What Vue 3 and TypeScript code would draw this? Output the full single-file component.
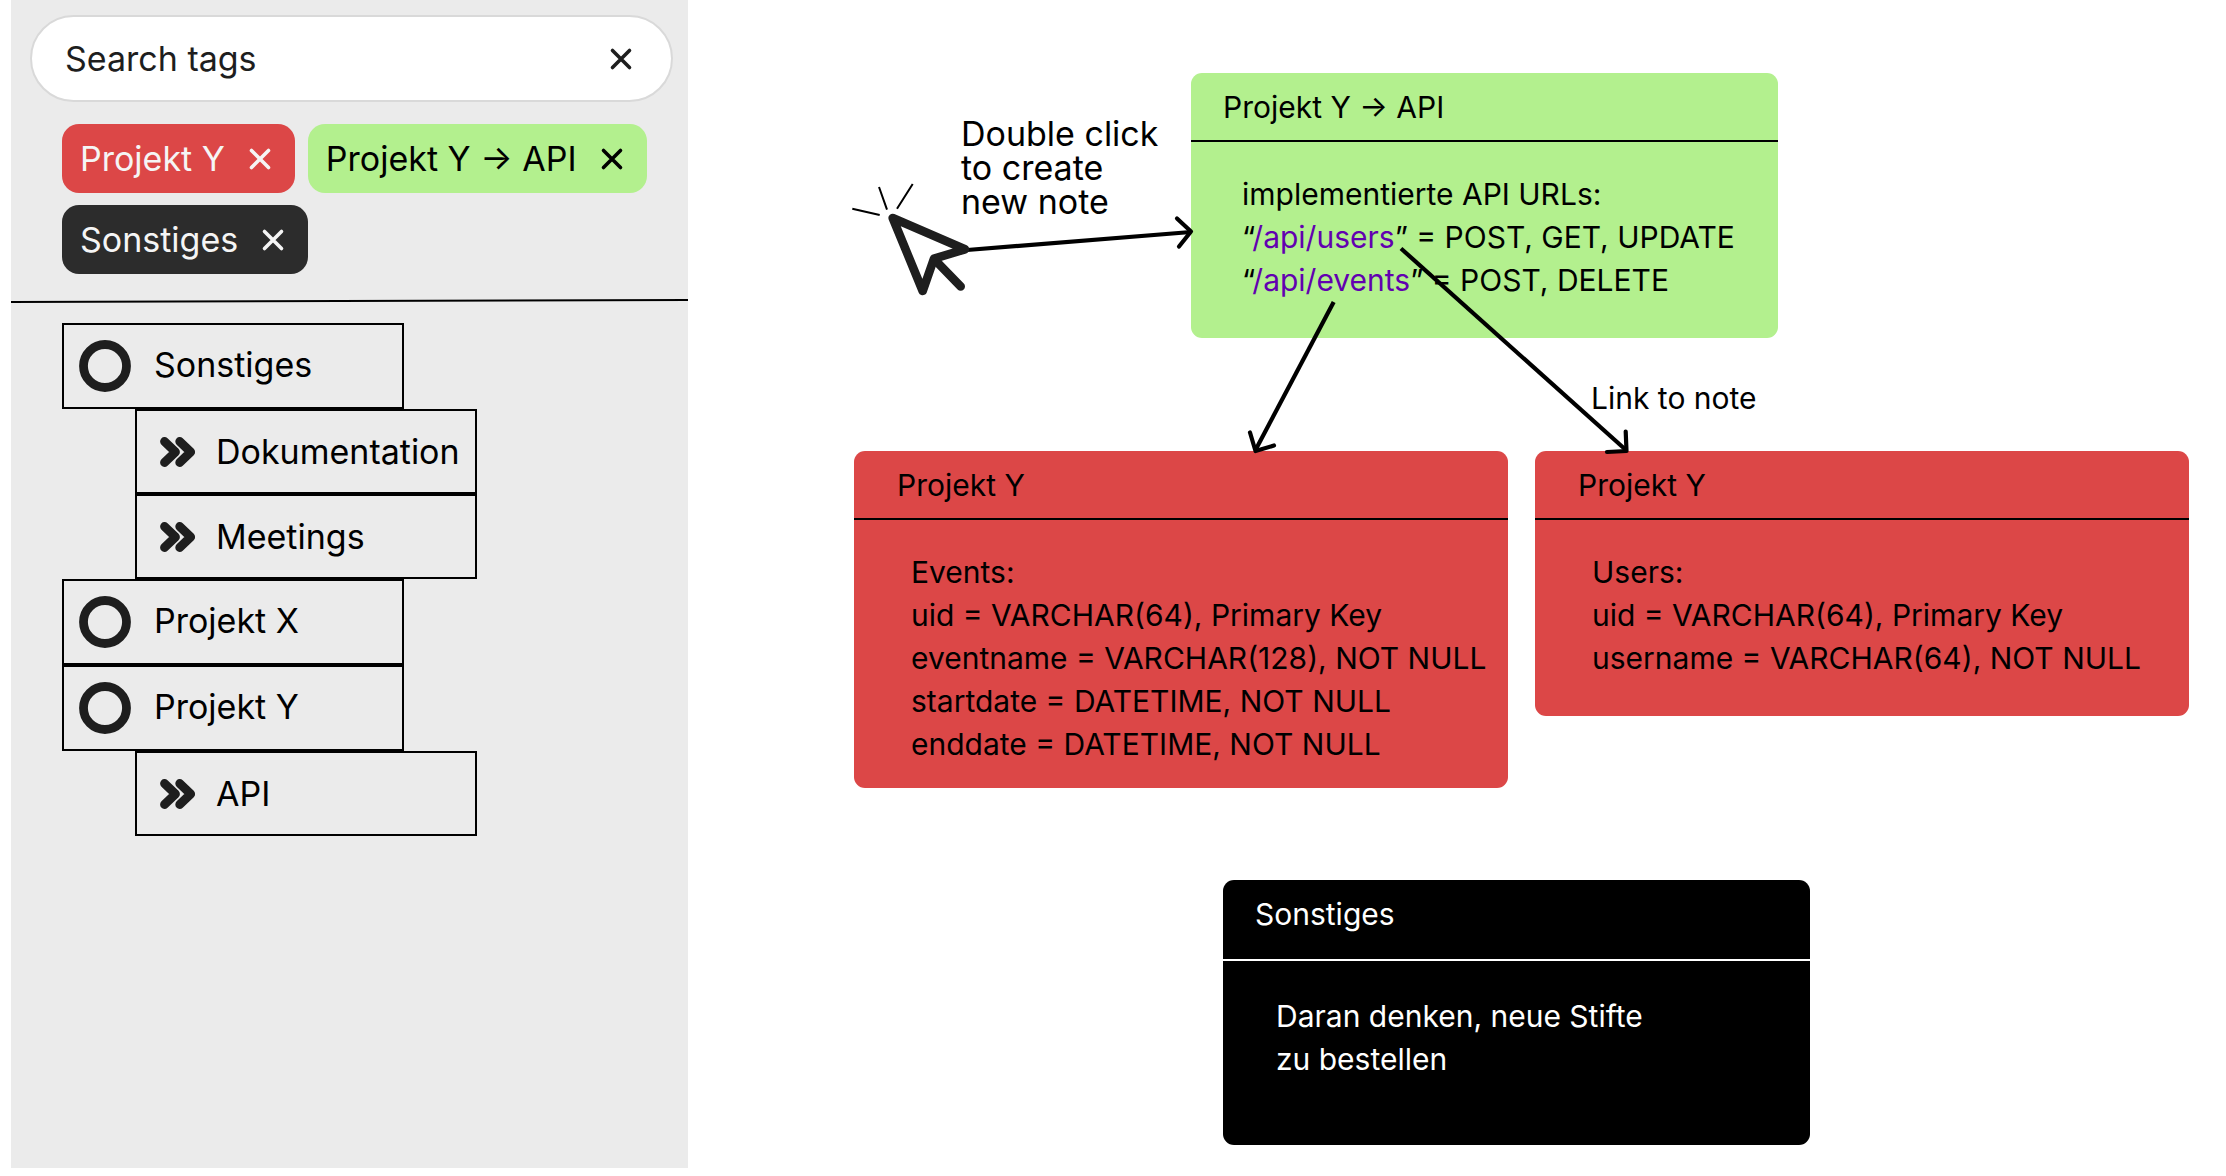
<script setup lang="ts">
import { ref } from 'vue'

interface Tag {
  label: string
  tone: 'red' | 'green' | 'dark'
}

interface TreeGroup {
  name: string
  children: string[]
}

interface Line {
  before: string
  link?: string
  after?: string
}

interface Note {
  id: string
  title: string
  tone: 'red' | 'green' | 'black'
  lines: Line[]
}

const query = ref('')

const tags = ref<Tag[]>([
  { label: 'Projekt Y', tone: 'red' },
  { label: 'Projekt Y → API', tone: 'green' },
  { label: 'Sonstiges', tone: 'dark' },
])

const tree: TreeGroup[] = [
  { name: 'Sonstiges', children: ['Dokumentation', 'Meetings'] },
  { name: 'Projekt X', children: [] },
  { name: 'Projekt Y', children: ['API'] },
]

const notes: Note[] = [
  {
    id: 'api',
    title: 'Projekt Y → API',
    tone: 'green',
    lines: [
      { before: 'implementierte API URLs:' },
      { before: '“', link: '/api/users', after: '” = POST, GET, UPDATE' },
      { before: '“', link: '/api/events', after: '” = POST, DELETE' },
    ],
  },
  {
    id: 'events',
    title: 'Projekt Y',
    tone: 'red',
    lines: [
      { before: 'Events:' },
      { before: 'uid = VARCHAR(64), Primary Key' },
      { before: 'eventname = VARCHAR(128), NOT NULL' },
      { before: 'startdate = DATETIME, NOT NULL' },
      { before: 'enddate = DATETIME, NOT NULL' },
    ],
  },
  {
    id: 'users',
    title: 'Projekt Y',
    tone: 'red',
    lines: [
      { before: 'Users:' },
      { before: 'uid = VARCHAR(64), Primary Key' },
      { before: 'username = VARCHAR(64), NOT NULL' },
    ],
  },
  {
    id: 'other',
    title: 'Sonstiges',
    tone: 'black',
    lines: [{ before: 'Daran denken, neue Stifte' }, { before: 'zu bestellen' }],
  },
]

function removeTag(tag: Tag): void {
  tags.value = tags.value.filter((entry) => entry !== tag)
}
</script>

<template>
  <div class="page">
    <aside class="sidebar">
      <form class="search" role="search" @submit.prevent>
        <input v-model="query" class="search-input" type="text" placeholder="Search tags" aria-label="Search tags" />
        <button class="icon-button" type="button" aria-label="Clear search" @click="query = ''">
          <svg class="cross" viewBox="0 0 34 34"><path d="M8.5 8.5l17 17M25.5 8.5l-17 17" /></svg>
        </button>
      </form>

      <ul class="tags">
        <li v-for="tag in tags" :key="tag.label" class="tag" :class="`tag-${tag.tone}`">
          <span>{{ tag.label }}</span>
          <button class="icon-button" type="button" :aria-label="`Remove ${tag.label}`" @click="removeTag(tag)">
            <svg class="cross" viewBox="0 0 34 34"><path d="M8.5 8.5l17 17M25.5 8.5l-17 17" /></svg>
          </button>
        </li>
      </ul>

      <svg class="divider" viewBox="0 0 677 6" preserveAspectRatio="none" aria-hidden="true">
        <line x1="0" y1="4" x2="677" y2="2" />
      </svg>

      <ul class="tree">
        <li v-for="group in tree" :key="group.name">
          <button class="row parent" type="button">
            <svg class="ring" viewBox="0 0 52 52" aria-hidden="true"><circle cx="26" cy="26" r="21.5" /></svg>
            <span class="parent-name">{{ group.name }}</span>
          </button>
          <ul v-if="group.children.length" class="branch">
            <li v-for="child in group.children" :key="child">
              <button class="row child" type="button">
                <svg class="chevrons" viewBox="0 0 36 30" aria-hidden="true">
                  <path d="M4.5 4.5L15.5 15L4.5 25.5M19.7 4.5L30.7 15L19.7 25.5" />
                </svg>
                <span>{{ child }}</span>
              </button>
            </li>
          </ul>
        </li>
      </ul>
    </aside>

    <main class="canvas">
      <article v-for="note in notes" :key="note.id" class="note" :class="[`note-${note.tone}`, `at-${note.id}`]">
        <h2 class="note-title">{{ note.title }}</h2>
        <div class="note-body">
          <p v-for="(line, index) in note.lines" :key="index">{{ line.before }}<a v-if="line.link" :href="`#${line.link}`">{{ line.link }}</a>{{ line.after }}</p>
        </div>
      </article>

      <svg class="links" width="1538" height="1168" aria-hidden="true">
        <g class="arrow">
          <path class="shaft" d="M279 250L503 232" />
          <path d="M489 218.5L503 231.5L491 246.5" />
          <path class="shaft" d="M645.7 302L567.5 450" />
          <path d="M562 432.5L567.5 451L586 445.5" />
          <path class="shaft" d="M713 248.5L938.5 450.5" />
          <path d="M937.7 431.5L938.5 451L919 452" />
        </g>
        <g class="pointer">
          <path d="M204.7 218L277 249.3L246 258.7L234.7 291Z" />
          <path d="M247 260L272.7 286.5" />
        </g>
        <path class="rays" d="M164.3 208.7L191.7 215M191 187L199 209.7M224.7 184L209 208.7" />
      </svg>

      <p class="hint">Double click<br />to create<br />new note</p>
      <p class="caption">Link to note</p>
    </main>
  </div>
</template>

<style>
body {
  margin: 0;
  background: #ffffff;
}
</style>

<style scoped>
.page {
  display: flex;
  min-height: 100vh;
  box-sizing: border-box;
  padding: 0 0 8px 11px;
  font-family: Inter, "Liberation Sans", sans-serif;
  font-size: 34px;
  line-height: 44px;
  color: #000000;
}

ul,
p,
h2 {
  margin: 0;
  padding: 0;
  list-style: none;
}

button,
input {
  font: inherit;
  color: inherit;
  background: none;
  border: 0;
  padding: 0;
  margin: 0;
}

button {
  cursor: pointer;
}

.sidebar {
  flex: 0 0 677px;
  box-sizing: border-box;
  padding-top: 15px;
  background: #ebebeb;
}

.search {
  display: flex;
  align-items: center;
  box-sizing: border-box;
  height: 87px;
  margin: 0 15px 0 19px;
  padding: 0 33px;
  border: 2px solid #d9d9d9;
  border-radius: 44px;
  background: #ffffff;
  color: #1e1e1e;
}

.search-input {
  flex: 1;
  min-width: 0;
  outline: none;
}

.search-input::placeholder {
  color: #1e1e1e;
  opacity: 1;
}

.icon-button {
  display: flex;
}

.cross {
  width: 34px;
  height: 34px;
  fill: none;
  stroke: currentColor;
  stroke-width: 3.6;
  stroke-linecap: round;
}

.tags {
  display: flex;
  flex-wrap: wrap;
  gap: 12px 13px;
  padding: 22px 30px 0 51px;
}

.tag {
  display: flex;
  align-items: center;
  gap: 18px;
  height: 69px;
  padding: 0 18px;
  border-radius: 17px;
  white-space: nowrap;
}

.tag-red {
  background: #dc4747;
  color: #f5f5f5;
}

.tag-green {
  background: #b3f08e;
  color: #000000;
}

.tag-dark {
  background: #2c2c2c;
  color: #f5f5f5;
}

.divider {
  display: block;
  width: 100%;
  height: 6px;
  margin: 24px 0 19px;
}

.divider line {
  stroke: #000000;
  stroke-width: 2;
}

.tree {
  padding-left: 51px;
}

.branch {
  padding-left: 73px;
}

.row {
  display: flex;
  align-items: center;
  box-sizing: border-box;
  width: 342px;
  border: 2px solid #000000;
  white-space: nowrap;
}

.parent {
  height: 86px;
  padding-left: 15px;
  gap: 23px;
}

.parent-name {
  padding-bottom: 3px;
}

.child {
  height: 85px;
  padding-left: 23px;
  gap: 20px;
}

.ring {
  width: 52px;
  height: 52px;
  fill: none;
  stroke: #1e1e1e;
  stroke-width: 8.8;
}

.chevrons {
  width: 36px;
  height: 30px;
  fill: none;
  stroke: #1e1e1e;
  stroke-width: 8.8;
  stroke-linecap: round;
  stroke-linejoin: round;
}

.canvas {
  position: relative;
  flex: 1;
  min-width: 0;
}

.note {
  position: absolute;
  box-sizing: border-box;
  min-height: 265px;
  border-radius: 11px;
  font-size: 30px;
  white-space: nowrap;
}

.note-title {
  padding: 12px 32px 11px;
  border-bottom: 2px solid currentColor;
  font-size: 30px;
  font-weight: 400;
  line-height: 44px;
}

.note-body {
  padding: 31px 50px 22px 51px;
  line-height: 43px;
}

.note-body a {
  color: #6200b0;
  text-decoration: none;
}

.note-green {
  width: 587px;
  background: #b3f08e;
}

.note-red {
  width: 654px;
  background: #dc4747;
}

.note-red .note-title {
  padding-left: 43px;
}

.note-red .note-body {
  padding-left: 57px;
}

.note-black {
  width: 587px;
  background: #000000;
  color: #ffffff;
}

.note-black .note-title {
  padding-bottom: 23px;
}

.note-black .note-body {
  padding-top: 34px;
  padding-left: 53px;
}

.at-api {
  left: 503px;
  top: 73px;
}

.at-events {
  left: 166px;
  top: 451px;
}

.at-users {
  left: 847px;
  top: 451px;
}

.at-other {
  left: 535px;
  top: 880px;
}

.links {
  position: absolute;
  left: 0;
  top: 0;
  fill: none;
  pointer-events: none;
}

.arrow {
  stroke: #000000;
  stroke-width: 4.2;
  stroke-linecap: round;
  stroke-linejoin: round;
}

.shaft {
  stroke-linecap: butt;
}

.pointer {
  stroke: #1e1e1e;
  stroke-width: 8.6;
  stroke-linecap: round;
  stroke-linejoin: round;
}

.rays {
  stroke: #000000;
  stroke-width: 2;
}

.hint {
  position: absolute;
  left: 273px;
  top: 117px;
  line-height: 34px;
  white-space: nowrap;
}

.caption {
  position: absolute;
  left: 903px;
  top: 376px;
  font-size: 30px;
  white-space: nowrap;
}
</style>
